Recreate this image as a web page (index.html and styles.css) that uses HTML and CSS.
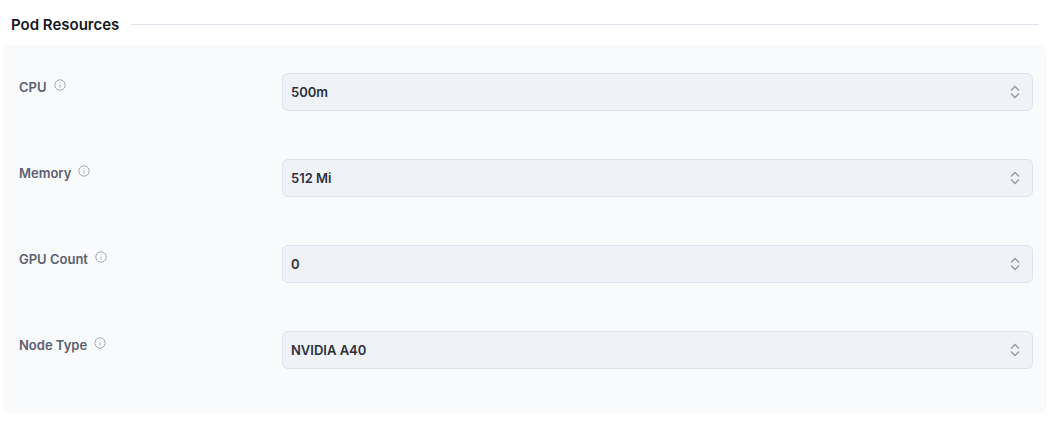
FILE: index.html
```html
<!DOCTYPE html>
<html lang="en">
<head>
    <meta charset="UTF-8">
    <title>Pod Resources</title>
    <link rel="stylesheet" href="styles.css">
</head>
<body>
    <div class="section-header">
        <span class="section-title">Pod Resources</span>
        <span class="section-line"></span>
    </div>

    <div class="panel">
        <div class="form-row">
            <div class="form-label">
                <span>CPU</span>
                <svg class="info-icon" viewBox="0 0 12 12"><circle cx="6" cy="6" r="5.2"/><path d="M6 5.5v3M6 3.4v.6"/></svg>
            </div>
            <div class="select-box">
                <span>500m</span>
                <svg class="chevrons" viewBox="0 0 10 14"><path d="M1 5.5l4-4 4 4M1 8.5l4 4 4-4"/></svg>
            </div>
        </div>
        <div class="form-row">
            <div class="form-label">
                <span>Memory</span>
                <svg class="info-icon" viewBox="0 0 12 12"><circle cx="6" cy="6" r="5.2"/><path d="M6 5.5v3M6 3.4v.6"/></svg>
            </div>
            <div class="select-box">
                <span>512 Mi</span>
                <svg class="chevrons" viewBox="0 0 10 14"><path d="M1 5.5l4-4 4 4M1 8.5l4 4 4-4"/></svg>
            </div>
        </div>
        <div class="form-row">
            <div class="form-label">
                <span>GPU Count</span>
                <svg class="info-icon" viewBox="0 0 12 12"><circle cx="6" cy="6" r="5.2"/><path d="M6 5.5v3M6 3.4v.6"/></svg>
            </div>
            <div class="select-box">
                <span>0</span>
                <svg class="chevrons" viewBox="0 0 10 14"><path d="M1 5.5l4-4 4 4M1 8.5l4 4 4-4"/></svg>
            </div>
        </div>
        <div class="form-row">
            <div class="form-label">
                <span>Node Type</span>
                <svg class="info-icon" viewBox="0 0 12 12"><circle cx="6" cy="6" r="5.2"/><path d="M6 5.5v3M6 3.4v.6"/></svg>
            </div>
            <div class="select-box">
                <span>NVIDIA A40</span>
                <svg class="chevrons" viewBox="0 0 10 14"><path d="M1 5.5l4-4 4 4M1 8.5l4 4 4-4"/></svg>
            </div>
        </div>
    </div>
</body>
</html>
```

FILE: styles.css
```css
body {
    margin: 0;
    background-color: #fff;
    font-family: Inter, "Noto Sans", sans-serif;
    overflow: hidden;
}

.section-header {
    display: flex;
    align-items: center;
    gap: 12px;
    height: 20px;
    margin: 14px 11px 11px;
}

.section-title {
    font-size: 15px;
    font-weight: 600;
    color: #14181f;
}

.section-line {
    flex: 1;
    height: 1px;
    background-color: #dfe3ee;
}

.panel {
    margin: 0 3px;
    padding: 28px 14px 44px 16px;
    height: 296px;
    background-color: #f9fafc;
    border-radius: 6px;
}

.form-row {
    display: flex;
    align-items: flex-start;
    margin-bottom: 48px;
}

.form-row:last-child {
    margin-bottom: 0;
}

.form-label {
    display: flex;
    align-items: flex-start;
    gap: 7px;
    width: 263px;
    font-size: 13px;
    font-weight: 600;
    line-height: 28px;
    color: #5a6070;
}

.info-icon {
    width: 12px;
    height: 12px;
    margin-top: 6px;
    fill: none;
    stroke: #a3a8b3;
    stroke-width: 1;
}

.select-box {
    flex: 1;
    display: flex;
    align-items: center;
    justify-content: space-between;
    box-sizing: border-box;
    height: 38px;
    padding: 0 12px 0 8px;
    background-color: #eff2f7;
    border: 1px solid #dfe3ee;
    border-radius: 6px;
    font-size: 13px;
    font-weight: 600;
    color: #2b303b;
}

.chevrons {
    width: 10px;
    height: 14px;
    fill: none;
    stroke: #949aa6;
    stroke-width: 1.3;
}
```
